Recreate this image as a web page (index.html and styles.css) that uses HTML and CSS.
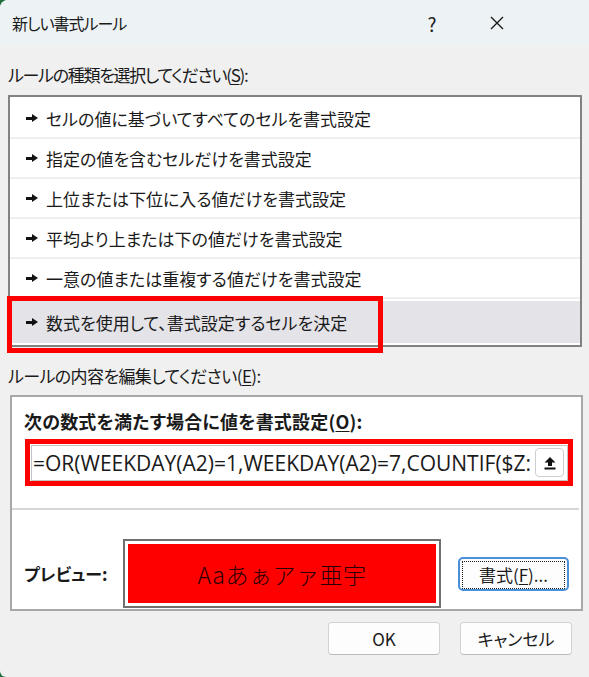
FILE: index.html
```html
<!DOCTYPE html>
<html lang="ja">
<head>
    <meta charset="UTF-8">
    <title>新しい書式ルール</title>
    <link rel="stylesheet" href="styles.css">
</head>
<body>
<div class="dialog">
    <div class="titlebar">
        <span class="title">新しい書式ルール</span>
        <span class="tb-btn help">?</span>
        <span class="tb-btn close">
            <svg width="16" height="16" viewBox="0 0 16 16"><path d="M2 2L14 14M14 2L2 14" stroke="#1a1a1a" stroke-width="1.4" fill="none"/></svg>
        </span>
    </div>

    <div class="label">ルールの種類を選択してください(<u>S</u>):</div>
    <ul class="rule-list">
        <li><i class="arrow"></i>セルの値に基づいてすべてのセルを書式設定</li>
        <li><i class="arrow"></i>指定の値を含むセルだけを書式設定</li>
        <li><i class="arrow"></i>上位または下位に入る値だけを書式設定</li>
        <li><i class="arrow"></i>平均より上または下の値だけを書式設定</li>
        <li><i class="arrow"></i>一意の値または重複する値だけを書式設定</li>
        <li class="selected"><i class="arrow"></i>数式を使用して、書式設定するセルを決定</li>
    </ul>
    <div class="mark mark-rule"></div>

    <div class="label label-edit">ルールの内容を編集してください(<u>E</u>):</div>
    <div class="group">
        <div class="group-label">次の数式を満たす場合に値を書式設定(<u>O</u>):</div>
        <div class="formula-mark">
            <div class="formula">
                <span class="formula-text">=OR(WEEKDAY(A2)=1,WEEKDAY(A2)=7,COUNTIF($Z:$Z,A2))</span>
                <span class="ref-btn">
                    <svg width="14" height="14" viewBox="0 0 14 14"><path d="M7 1L12.5 6.5H9V10H5V6.5H1.5Z" fill="#111"/><rect x="1.5" y="11.5" width="11" height="2" fill="#111"/></svg>
                </span>
            </div>
        </div>
        <div class="sep"></div>
        <div class="preview-row">
            <span class="preview-label">プレビュー:</span>
            <div class="preview-box"><div class="preview-fill">Aaあぁアァ亜宇</div></div>
            <button class="btn format"><span class="focus">書式(<u>F</u>)...</span></button>
        </div>
    </div>

    <div class="actions">
        <button class="btn">OK</button>
        <button class="btn">キャンセル</button>
    </div>
</div>
</body>
</html>
```

FILE: styles.css
```css
html {
    background: #1f6e3b;
}
body {
    margin: 0;
    width: 589px;
    height: 677px;
    overflow: hidden;
    font-family: "Noto Sans CJK JP", "Noto Sans", sans-serif;
    font-size: 17px;
    font-feature-settings: "palt";
    color: #1a1a1a;
}
.dialog {
    position: relative;
    height: 677px;
    background: #f0f0f0;
    border-top-left-radius: 8px;
    border-bottom-left-radius: 6px;
    overflow: hidden;
}
.titlebar {
    height: 46px;
    display: flex;
    align-items: center;
    padding-left: 12px;
    background: #edf3f5;
}
.title {
    flex: 1;
    font-size: 16px;
    letter-spacing: -1px;
}
.tb-btn {
    width: 46px;
    text-align: center;
    font-size: 19px;
    display: flex;
    justify-content: center;
}
.help {
    margin-right: 19px;
}
.close {
    margin-right: 69px;
}
.label {
    margin: 17px 0 0 8px;
    height: 24px;
    line-height: 24px;
    letter-spacing: -1.3px;
}
.label-edit {
    letter-spacing: -0.6px;
}
.label u, .group-label u, .btn u {
    text-underline-offset: 2px;
}
.rule-list {
    list-style: none;
    margin: 8px 7px 0 8px;
    padding: 2px 0 2px;
    border: 2px solid #828282;
    background: #fff;
}
.rule-list li {
    box-sizing: border-box;
    height: 40px;
    display: flex;
    align-items: center;
    padding-left: 16px;
    border-bottom: 2px solid #efefef;
}
.rule-list li:last-child {
    border-bottom: none;
}
.rule-list li.selected {
    background: #e3e3e8;
    height: 42px;
    margin-top: 2px;
}
.arrow {
    display: inline-block;
    width: 12px;
    height: 8px;
    margin-right: 8px;
    background:
        linear-gradient(#111, #111) 0 2.5px / 7px 3px no-repeat;
    position: relative;
}
.arrow::after {
    content: "";
    position: absolute;
    left: 6px;
    top: 0;
    border-left: 6px solid #111;
    border-top: 4px solid transparent;
    border-bottom: 4px solid transparent;
}
.mark {
    position: absolute;
    border: 5px solid #ff0000;
    pointer-events: none;
}
.mark-rule {
    left: 7px;
    top: 296px;
    width: 366px;
    height: 47px;
}
.group {
    margin: 7px 6px 0 10px;
    border: 2px solid #a8a8a8;
    background: #fff;
    height: 212px;
}
.group-label {
    font-weight: bold;
    font-size: 18px;
    letter-spacing: 0.2px;
    margin: 12px 0 0 12px;
    height: 24px;
    line-height: 24px;
}
.formula-mark {
    margin: 6px 8px 0 13px;
    border: 5px solid #ff0000;
    padding: 1px 0 0 1px;
    height: 36px;
}
.formula {
    position: relative;
    height: 34px;
    border: 1px solid #c4c4c4;
    background: #fff;
    display: flex;
    align-items: center;
}
.formula-text {
    flex: 1;
    overflow: hidden;
    margin-right: 37px;
    white-space: nowrap;
    font-family: "Open Sans", "Noto Sans", sans-serif;
    font-size: 21px;
    letter-spacing: 0;
    padding-left: 1px;
}
.ref-btn {
    position: absolute;
    right: 3px;
    top: 2px;
    width: 27px;
    height: 27px;
    border: 1px solid #cfcfcf;
    border-radius: 4px;
    background: #fff;
    display: flex;
    align-items: center;
    justify-content: center;
}
.sep {
    height: 2px;
    background: #d6d6d6;
    margin: 22px 2px 0 0;
}
.preview-row {
    display: flex;
    align-items: center;
    margin-top: 29px;
}
.preview-label {
    width: 99px;
    padding-left: 12px;
    font-weight: bold;
}
.preview-box {
    width: 308px;
    height: 59px;
    border: 2px solid #707070;
    padding: 3px;
    background: #fff;
}
.preview-fill {
    height: 100%;
    background: #ff0000;
    display: flex;
    align-items: center;
    justify-content: center;
    font-size: 23px;
    font-weight: 300;
    font-feature-settings: normal;
    color: #2a0000;
    letter-spacing: 0.5px;
}
.btn {
    font-family: "Noto Sans CJK JP", "Noto Sans", sans-serif;
    font-size: 17px;
    font-feature-settings: "palt";
    color: #1a1a1a;
    width: 112px;
    height: 33px;
    background: #fdfdfd;
    border: 1px solid #d3d3d3;
    border-bottom-color: #bdbdbd;
    border-radius: 4px;
    padding: 0;
}
.format {
    margin-left: 17px;
    width: 111px;
    height: 34px;
    border: 2px solid #4a8fd8;
    border-radius: 5px;
    padding: 2px;
}
.focus {
    display: flex;
    height: 100%;
    align-items: center;
    justify-content: center;
    border: 1px dotted #222;
}
.actions {
    display: flex;
    justify-content: flex-end;
    gap: 20px;
    margin: 11px 17px 0 0;
}
```
